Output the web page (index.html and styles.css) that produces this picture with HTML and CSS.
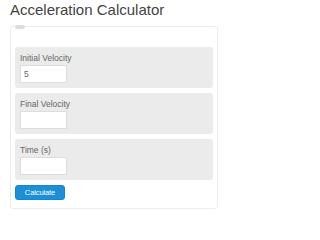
FILE: index.html
```html
<!DOCTYPE html>
<html>
<head>
<meta charset="utf-8">
<link rel="stylesheet" href="styles.css">
</head>
<body>
<div class="page">
  <h1 class="title">Acceleration Calculator</h1>
  <div class="card">
    <span class="tab"></span>
    <div class="group">
      <label class="label">Initial Velocity</label>
      <input class="field" type="text" value="5">
    </div>
    <div class="group">
      <label class="label">Final Velocity</label>
      <input class="field" type="text" value="">
    </div>
    <div class="group">
      <label class="label">Time (s)</label>
      <input class="field" type="text" value="">
    </div>
    <button class="btn" type="button">Calculate</button>
  </div>
</div>
</body>
</html>
```

FILE: styles.css
```css
html, body {
  margin: 0;
  padding: 0;
  background: #ffffff;
}
.page {
  width: 208px;
  padding: 1px 0 0 10px;
  font-family: "Liberation Sans", Arial, sans-serif;
}
.title {
  margin: 0 0 7px 0;
  font-size: 15px;
  line-height: 18px;
  font-weight: normal;
  color: #444444;
  white-space: nowrap;
}
.card {
  position: relative;
  width: 198px;
  border: 1px solid #ececec;
  border-radius: 3px;
  padding: 20px 4px 4px 4px;
  height: 157px;
  box-sizing: content-box;
}
.tab {
  position: absolute;
  top: -2px;
  left: 4px;
  width: 10px;
  height: 4px;
  border-radius: 2px;
  background: #dcdcdc;
}
.group {
  display: flex;
  flex-direction: column;
  align-items: flex-start;
  background: #ebebeb;
  border-radius: 3px;
  height: 41px;
  box-sizing: border-box;
  padding: 6px 5px 5px 5px;
  margin-bottom: 5px;
}
.label {
  font-size: 8.5px;
  line-height: 11px;
  color: #666666;
  margin-bottom: 1px;
}
.field {
  width: 47px;
  height: 18px;
  box-sizing: border-box;
  border: 1px solid #dddddd;
  background: #ffffff;
  margin: 0;
  padding: 0 3px;
  font-family: "Liberation Sans", Arial, sans-serif;
  font-size: 8.5px;
  color: #666666;
  outline: none;
}
.btn {
  display: block;
  width: 50px;
  height: 15px;
  margin: 0;
  padding: 0;
  border: 1px solid #1586cc;
  border-radius: 3px;
  background: #1b8fd8;
  color: #ffffff;
  font-family: "Liberation Sans", Arial, sans-serif;
  font-size: 7.5px;
  line-height: 13px;
  letter-spacing: -0.1px;
}
```
